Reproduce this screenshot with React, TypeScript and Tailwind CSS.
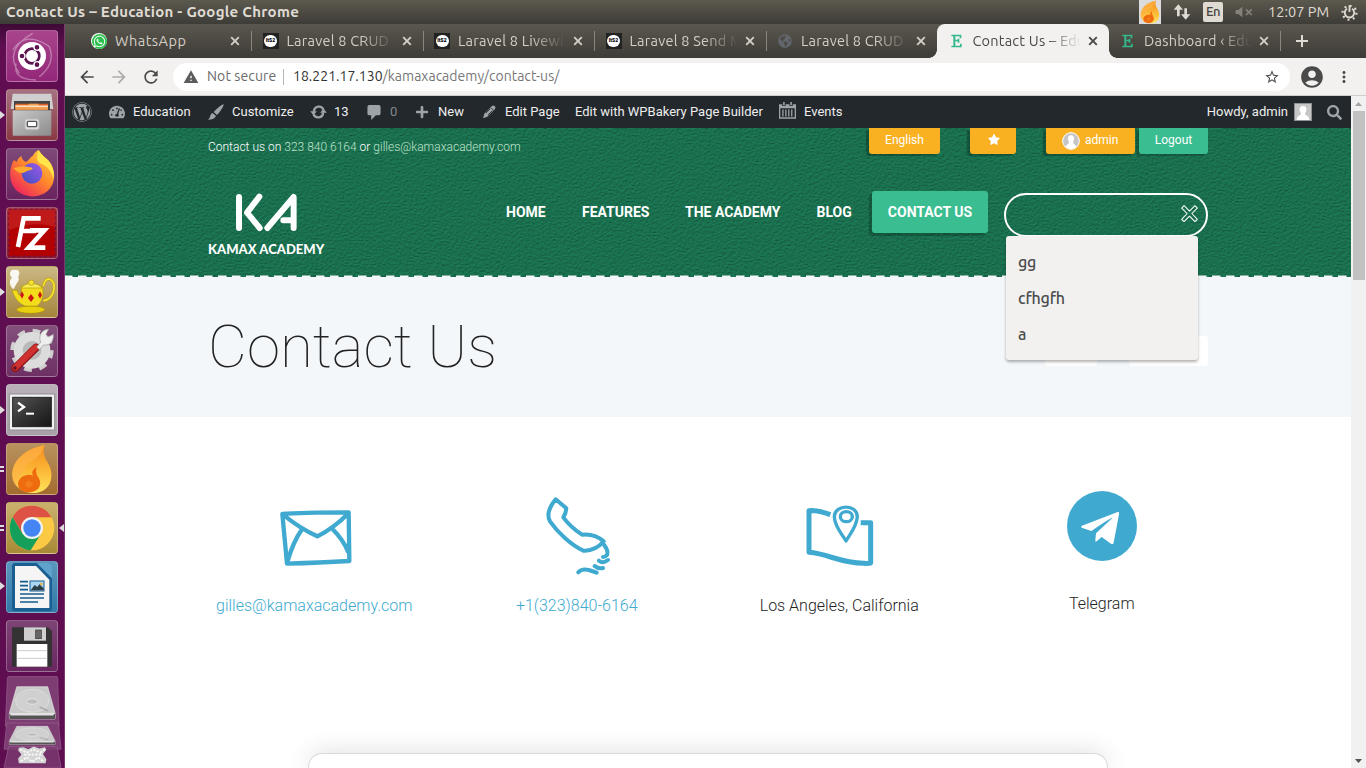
import React from "react";
import { FaWordpress, FaTachometerAlt, FaPlus, FaStar, FaWhatsapp, FaSearch, FaGlobeAmericas } from "react-icons/fa";
import { MdStarBorder, MdAccountCircle, MdMoreVert, MdWarning, MdArrowBack, MdArrowForward, MdRefresh } from "react-icons/md";

const UI = "font-['Ubuntu','Noto_Sans',sans-serif]";

function Tile({ className, children, label }: { className: string; children: React.ReactNode; label: string }) {
  return (
    <div aria-label={label} className={`h-[52px] w-[52px] shrink-0 rounded-[4px] border border-white/25 ${className}`}>
      <svg viewBox="3 3 150 150" className="block h-full w-full">{children}</svg>
    </div>
  );
}

function Flame() {
  return (
    <g>
      <path d="M116 6C106 36 122 50 130 68C148 108 128 150 80 150C44 150 19 126 19 94C19 52 60 16 116 6Z" fill="url(#fl)" />
      <path d="M116 6C106 32 92 46 80 54C62 62 54 70 56 86C38 96 30 112 34 132C22 120 18 108 19 94C19 52 60 16 116 6Z" fill="#ffb347" opacity=".7" />
      <path d="M92 72C78 80 76 92 82 98C62 90 36 102 36 124C36 140 50 148 68 148C90 148 106 134 102 114C98 100 86 94 92 72Z" fill="#ee6c0f" />
      <path d="M70 112C56 116 54 132 66 134C78 134 84 124 78 114C76 118 70 118 70 112Z" fill="#f47c1c" />
    </g>
  );
}

function Drive() {
  return (
    <g>
      <path d="M32 32H124L146 110V128H10V110Z" fill="#c9c9c9" stroke="#e8e8e8" strokeWidth="2" />
      <path d="M10 112H146V128H10Z" fill="#555" />
      <path d="M10 110H146L140 118H14Z" fill="#e2e2e2" />
      <ellipse cx="78" cy="74" rx="50" ry="34" fill="#d0d0d0" stroke="#e4e4e4" strokeWidth="2" />
      <ellipse cx="78" cy="76" rx="17" ry="8" fill="#bdbdbd" stroke="#f0f0f0" strokeWidth="2" />
      <path d="M100 92L126 104" stroke="#aaa" strokeWidth="5" />
    </g>
  );
}

function Launcher() {
  return (
    <aside className="relative h-[744px] w-[65px] shrink-0 overflow-hidden border-r border-[#7c3a70] bg-[#5f0e50] bg-linear-to-b from-[#3d0a35] via-[#600e51] via-[3%] to-[#5d0d50]">
      <div className="flex flex-col gap-[7px] pl-[6px] pt-[6px]">
        <Tile label="Dash" className="bg-linear-to-b from-[#a8448c] to-[#932779]">
          <path d="M20 60Q60 0 130 50Q150 100 100 140M40 130Q-10 60 80 10M30 100Q20 150 90 150" fill="none" stroke="#fff" strokeOpacity=".35" strokeWidth="4" />
          <circle cx="78" cy="78" r="42" fill="#fff" />
          <circle cx="78" cy="78" r="22" fill="none" stroke="#5c1450" strokeWidth="8" />
          {[[48, 78], [93, 52], [93, 104]].map(([x, y]) => <circle key={`${x}${y}`} cx={x} cy={y} r="9" fill="#5c1450" stroke="#fff" strokeWidth="4" />)}
        </Tile>
        <Tile label="Files" className="bg-linear-to-b from-[#a57280] to-[#893944]">
          <path d="M20 14H136L142 60H14Z" fill="#cfcfcf" />
          <rect x="24" y="36" width="108" height="30" fill="#444" />
          <path d="M28 44H126V62H28Z" fill="#d9632a" />
          <path d="M28 48H66L70 44H98V50H126V62H28Z" fill="#f0a050" />
          <rect x="28" y="50" width="98" height="3" fill="#fff" />
          <rect x="20" y="64" width="116" height="76" rx="3" fill="url(#cab)" />
          <rect x="57" y="90" width="42" height="32" rx="6" fill="#ddd" stroke="#bbb" strokeWidth="3" />
          <rect x="64" y="97" width="28" height="16" rx="3" fill="#fff" stroke="#555" strokeWidth="4" />
        </Tile>
        <Tile label="Firefox" className="bg-linear-to-b from-[#7d4a78] to-[#6a235f]">
          <path d="M98 6C106 22 118 28 128 38C150 64 152 104 124 130C98 152 52 150 28 124C8 102 8 60 24 36L32 42C34 34 40 28 46 24C48 34 52 38 60 42C70 36 74 26 80 24C84 16 90 10 98 6Z" fill="url(#ff)" />
          <path d="M98 6C108 24 120 30 128 38C142 56 146 76 142 92C134 60 116 52 102 46C90 38 92 20 98 6Z" fill="#ffe54a" />
          <circle cx="78" cy="76" r="31" fill="url(#ffp)" />
          <path d="M22 60C42 54 62 54 80 60C78 68 66 66 58 72C48 78 36 76 22 60Z" fill="#ffac2e" />
        </Tile>
        <Tile label="FileZilla" className="bg-linear-to-b from-[#a03a48] to-[#82203a]">
          <rect x="8" y="8" width="140" height="140" fill="#b30000" stroke="#7a1038" strokeWidth="5" strokeDasharray="9 7" />
          <path d="M8 8H148V60Q80 40 8 70Z" fill="#c72a2a" opacity=".6" />
          <path d="M36 120L53 34H104M46 72H90M72 70H115L68 122H118" fill="none" stroke="#fff" strokeWidth="14" />
        </Tile>
        <Tile label="Teapot" className="bg-linear-to-b from-[#cbb883] to-[#a5853c]">
          <path d="M112 60C118 26 148 38 144 66C142 92 124 104 112 104" fill="none" stroke="#bfa010" strokeWidth="9" />
          <path d="M112 60C118 26 148 38 144 66C142 92 124 104 112 104" fill="none" stroke="#f5e335" strokeWidth="5" />
          <ellipse cx="74" cy="131" rx="42" ry="11" fill="#e8d010" stroke="#a88c08" strokeWidth="2" />
          <path d="M18 72L34 74C36 88 42 90 46 84L46 60H108C116 84 108 112 92 120H58C36 112 26 96 18 72Z" fill="#f2dc1c" stroke="#b39a0a" strokeWidth="2" />
          <path d="M46 66C56 48 96 48 108 66Z" fill="#f8ec50" stroke="#b39a0a" strokeWidth="2" />
          <circle cx="76" cy="50" r="8" fill="#f5e335" stroke="#b39a0a" strokeWidth="2" />
          <path d="M48 76l6 11-6 11-6-11ZM75 84l9 12-9 12-9-12ZM102 76l6 11-6 11-6-11Z" fill="#cc1515" />
          <path d="M20 68C8 54 10 40 18 36C6 24 14 8 26 12C40 8 44 24 36 32C44 44 30 50 24 68Z" fill="#fff" opacity=".9" />
        </Tile>
        <Tile label="Settings" className="bg-linear-to-b from-[#83507b] to-[#6e3064]">
          <circle cx="78" cy="76" r="56" fill="none" stroke="#cfcfcf" strokeWidth="18" strokeDasharray="22 22" />
          <circle cx="78" cy="76" r="40" fill="none" stroke="#dcdcdc" strokeWidth="30" />
          <circle cx="78" cy="76" r="28" fill="#b9b9b9" />
          <path d="M28 129L90 68" stroke="#8f1414" strokeWidth="24" strokeLinecap="round" />
          <path d="M28 128L89 67" stroke="#cf3030" strokeWidth="18" strokeLinecap="round" />
          <circle cx="27" cy="129" r="5" fill="#5a1020" />
          <path d="M92 66L104 52C96 30 108 14 128 12L120 28L126 36L142 28C144 50 132 62 112 60L100 74Z" fill="#eee" stroke="#999" strokeWidth="2" />
        </Tile>
        <Tile label="Terminal" className="bg-linear-to-b from-[#b9b0b9] to-[#a89fa9]">
          <rect x="10" y="30" width="136" height="108" fill="#f1f1f1" stroke="#8f8f8f" strokeWidth="3" />
          <rect x="20" y="40" width="116" height="88" fill="url(#term)" stroke="#222" strokeWidth="3" />
          <path d="M36 56L54 69L36 82" fill="none" stroke="#fff" strokeWidth="7" />
          <path d="M60 89H84" stroke="#fff" strokeWidth="6" />
        </Tile>
        <Tile label="Flame" className="bg-linear-to-b from-[#b8925f] to-[#a46c2e]"><Flame /></Tile>
        <Tile label="Chrome" className="bg-linear-to-b from-[#cbb06d] to-[#a88a35]">
          <circle cx="78" cy="78" r="67" fill="#fbc943" />
          <path d="M78 11A67 67 0 0 0 20 45L50 96L78 46H136A67 67 0 0 0 78 11Z" fill="#de5145" />
          <path d="M20 45A67 67 0 0 0 74 145L106 94L50 96Z" fill="#14a05a" />
          <circle cx="78" cy="78" r="33" fill="#f2f2f2" />
          <circle cx="78" cy="78" r="26" fill="#4385f4" />
        </Tile>
        <Tile label="Writer" className="bg-linear-to-b from-[#5b97bd] to-[#2f79a8]">
          <rect x="18" y="6" width="120" height="144" rx="10" fill="#1a5e92" />
          <path d="M92 6H128Q138 6 138 16V52Z" fill="#5fa3cd" />
          <path d="M27 15H90L130 56V141H27Z" fill="#f5f5f5" />
          <path d="M42 62H66M42 74H66M42 86H66M42 99H114M42 111H114M42 123H96" stroke="#155c8f" strokeWidth="5" />
          <rect x="72" y="60" width="42" height="30" fill="#a9d6f2" stroke="#155c8f" strokeWidth="3" />
          <path d="M74 88L86 72L94 78L100 70L113 82V88Z" fill="#2c3e46" /><circle cx="106" cy="69" r="4" fill="#f0b03c" />
        </Tile>
        <Tile label="Floppy" className="bg-linear-to-b from-[#7d4475] to-[#692560]">
          <path d="M18 22H126L138 34V140H18Z" fill="#333" />
          <rect x="54" y="22" width="66" height="40" fill="#cfcfcf" /><rect x="89" y="30" width="17" height="26" fill="#666" stroke="#333" strokeWidth="2" />
          <rect x="32" y="72" width="92" height="68" fill="#fff" />
          <path d="M34 92H122M34 115H122" stroke="#ccc" strokeWidth="3" />
        </Tile>
      </div>
      <svg viewBox="0 530 198 274" className="absolute left-0 top-[652px] h-[92px] w-[65px]" preserveAspectRatio="xMinYMin slice">
        <path d="M22 536Q22 530 30 530H164Q172 530 172 536L176 680H16Z" fill="#7d3c72" stroke="#96608d" strokeWidth="2" />
        <g transform="translate(18 530)"><Drive /></g>
        <path d="M20 670H174L182 748H12Z" fill="#7d3c72" stroke="#96608d" strokeWidth="2" />
        <g transform="translate(18 662) scale(1 .56)"><Drive /></g>
        <path d="M26 740H170L182 802H12Z" fill="#7d3c72" fillOpacity=".8" stroke="#96608d" strokeWidth="2" />
        <path d="M56 744L70 742L84 748L100 740L118 746L134 742L138 750L128 762L138 778L136 790H56L54 776L64 764L54 752Z" fill="#d5d5d5" />
        <path d="M60 748L80 758L100 748L120 758L134 748M62 784L80 772L96 786L114 772L132 786M72 764H124" stroke="#fafafa" strokeWidth="5" fill="none" strokeDasharray="7 4" />
      </svg>
      <svg viewBox="0 0 65 744" className="pointer-events-none absolute left-0 top-0 h-[744px] w-[65px]">
        <path d="M0 87l5 4-5 4ZM0 264l5 4-5 4ZM0 382l5 4-5 4ZM0 558l5 4-5 4ZM64 500l-5 4 5 4Z" fill="#ddd" />
        <path d="M0 443H4M0 447H4M0 502H4M0 506H4" stroke="#ddd" strokeWidth="2" />
      </svg>
    </aside>
  );
}

function Defs() {
  return (
    <svg className="absolute h-0 w-0" aria-hidden="true">
      <defs>
        <linearGradient id="fl" x1="0" y1="0" x2="0" y2="1"><stop offset="0" stopColor="#f58a1f" /><stop offset=".5" stopColor="#fbb534" /><stop offset="1" stopColor="#ffe45c" /></linearGradient>
        <linearGradient id="cab" x1="0" y1="0" x2="1" y2="1"><stop offset="0" stopColor="#c9c9c9" /><stop offset="1" stopColor="#8b8b8b" /></linearGradient>
        <linearGradient id="ff" x1="1" y1="0" x2=".2" y2="1"><stop offset="0" stopColor="#ffe14a" /><stop offset=".5" stopColor="#ff8a2a" /><stop offset="1" stopColor="#ee1f5f" /></linearGradient>
        <linearGradient id="ffp" x1="1" y1="0" x2="0" y2="1"><stop offset="0" stopColor="#a05ae8" /><stop offset="1" stopColor="#3f4fc0" /></linearGradient>
        <linearGradient id="term" x1="0" y1="0" x2="1" y2="1"><stop offset="0" stopColor="#555" /><stop offset=".5" stopColor="#333" /><stop offset="1" stopColor="#151515" /></linearGradient>
        <filter id="felt" x="0" y="0" width="100%" height="100%" colorInterpolationFilters="sRGB">
          <feTurbulence type="fractalNoise" baseFrequency="0.42 0.62" numOctaves="2" seed="7" result="n" />
          <feDiffuseLighting in="n" surfaceScale="0.7" diffuseConstant="1.02" lightingColor="#1e815b">
            <feDistantLight azimuth="250" elevation="58" />
          </feDiffuseLighting>
        </filter>
      </defs>
    </svg>
  );
}

function TopPanel() {
  return (
    <div className={`flex h-6 items-center bg-linear-to-b from-[#5c594f] to-[#3e3c37] text-[#dfdbd2] ${UI}`}>
      <span className="ml-[6px] whitespace-nowrap text-[15px] font-bold leading-6 tracking-[0.28px]">Contact Us – Education - Google Chrome</span>
      <div className="ml-auto flex items-center">
        <div className="mr-[12px] h-6 w-[22px] bg-[#dcdcdc]"><svg viewBox="14 2 128 152" className="h-full w-full"><Flame /></svg></div>
        <svg viewBox="0 0 54 54" className="mr-[12px] h-[18px] w-[18px]" fill="#dfdbd2"><path d="M16 4L30 20H20V40H12V20H2ZM38 50L24 34H34V16H42V34H52Z" /></svg>
        <span className="mr-[12px] flex h-5 w-5 items-center justify-center rounded-[2px] bg-[#dfdbd2] text-[13px] font-medium tracking-[-0.5px] text-[#45433d]">En</span>
        <svg viewBox="0 0 54 36" className="mr-[15px] h-3 w-[18px]"><path d="M2 12H10L22 2V34L10 24H2Z" fill="#85827a" /><path d="M33 10L50 27M50 10L33 27" stroke="#85827a" strokeWidth="5" /></svg>
        <span className="w-[61px] whitespace-nowrap text-[14.5px] tracking-[0.02px]">12:07 PM</span>
        <svg viewBox="0 0 54 54" className="ml-[12px] mr-[8px] h-[17px] w-[17px]" fill="none" stroke="#dfdbd2"><path d="M19 15A15 15 0 1 0 35 15" strokeWidth="6" /><path d="M27 4V25" strokeWidth="6" /><circle cx="27" cy="28" r="22" strokeWidth="7" strokeDasharray="6 11.28" /></svg>
      </div>
    </div>
  );
}

function Favicon({ kind }: { kind: string }) {
  if (kind === "wa")
    return <span className="flex h-4 w-4 items-center justify-center rounded-full bg-white"><span className="flex h-[15px] w-[15px] items-center justify-center rounded-full bg-[#2cc14e]"><FaWhatsapp className="h-[13px] w-[13px] text-white" /></span></span>;
  if (kind === "its") return <span className="flex h-4 w-4 items-center justify-center bg-[#222]"><span className="flex h-3 w-[13px] items-center justify-center rounded-full bg-white font-['Roboto',sans-serif] text-[5px] font-black text-black">ItS2</span></span>;
  if (kind === "globe") return <FaGlobeAmericas className="h-[14px] w-4 text-[#62676e]" />;
  return (
    <svg viewBox="0 0 48 48" className="h-4 w-4"><path d="M7 5H37V16H32V10H19V20H26V17H31V29H26V25H19V38H33V32H38V43H7V38H13V10H7Z" fill="#33b98c" /></svg>
  );
}

const tabs = [
  { title: "WhatsApp", icon: "wa" },
  { title: "Laravel 8 CRUD A", icon: "its" },
  { title: "Laravel 8 Livewir", icon: "its" },
  { title: "Laravel 8 Send M", icon: "its" },
  { title: "Laravel 8 CRUD A", icon: "globe" },
  { title: "Contact Us – Edu", icon: "e", active: true },
  { title: "Dashboard ‹ Edu", icon: "e" },
];

function TabStrip() {
  return (
    <div className={`flex h-[34px] bg-linear-to-b from-[#5a574e] to-[#3e3c37] pl-[14.5px] ${UI}`}>
      {tabs.map((t, i) => (
        <div key={i} className={`relative flex h-full w-[171.5px] shrink-0 items-center pl-[11.5px] ${t.active ? "rounded-t-lg bg-[#f2f1f0] text-[#4a4a4a]" : "text-[#d3cfc6]"}`}>
          {t.active && <span className="absolute -left-2 bottom-0 h-2 w-2 bg-[radial-gradient(circle_at_0_0,transparent_7.5px,#f2f1f0_8px)]" />}
          {t.active && <span className="absolute -right-2 bottom-0 h-2 w-2 bg-[radial-gradient(circle_at_100%_0,transparent_7.5px,#f2f1f0_8px)]" />}
          <Favicon kind={t.icon} />
          <span className={`ml-2 w-[108px] overflow-hidden whitespace-nowrap text-[14.5px] leading-5 ${t.icon === "wa" ? "tracking-[0.5px]" : "tracking-[0.22px] [mask-image:linear-gradient(to_right,black_68%,transparent)]"}`}>{t.title}</span>
          <svg viewBox="0 0 14 14" className="ml-[5px] h-[14px] w-[14px] shrink-0" fill="none" stroke="currentColor" strokeWidth="1.9"><path d="M3.2 3.2L10.8 10.8M10.8 3.2L3.2 10.8" /></svg>
          {i !== 4 && !t.active && <span className="absolute -right-px top-[7px] h-5 w-px bg-[#8a867c]" />}
        </div>
      ))}
      <svg viewBox="0 0 14 14" className="ml-[14.5px] mt-[10px] h-[14px] w-[14px]" fill="none" stroke="#dfdbd2" strokeWidth="2"><path d="M7 1V13M1 7H13" /></svg>
    </div>
  );
}

function Toolbar() {
  return (
    <div className={`flex h-[38px] items-center border-b border-[#cfcecd] bg-[#f2f1f0] text-[#4a4a4a] ${UI}`}>
      <MdArrowBack className="ml-[12px] h-5 w-5" />
      <MdArrowForward className="ml-[12px] h-5 w-5 text-[#ababab]" />
      <MdRefresh className="ml-[12px] h-5 w-5" />
      <div className="ml-[12px] flex h-7 w-[1117px] items-center rounded-full bg-white text-[14px]">
        <MdWarning className="ml-[10px] h-4 w-4 text-[#5c5c5c]" />
        <span className="ml-2 w-[69px] whitespace-nowrap tracking-[0.1px] text-[#6b6b6b]">Not secure</span>
        <span className="ml-[7px] h-4 w-px bg-[#b5b5b5]" />
        <span className="ml-[9px] whitespace-nowrap tracking-[0.02px] text-[#777]"><span className="text-[#333]">18.221.17.130</span>/kamaxacademy/contact-us/</span>
        <MdStarBorder className="ml-auto mr-[10px] h-4 w-4" />
      </div>
      <MdAccountCircle className="ml-[9px] h-[26px] w-[26px]" />
      <MdMoreVert className="ml-[10px] h-[18px] w-[18px]" />
    </div>
  );
}

function BarItem({ w, icon, text, muted }: { w: string; icon?: React.ReactNode; text?: string; muted?: boolean }) {
  return (
    <div className={`flex h-full shrink-0 items-center gap-2 whitespace-nowrap pl-[7px] ${w}`}>
      {icon && <span className="flex w-4 shrink-0 justify-center text-[#9ea3a8]">{icon}</span>}
      {text && <span className={muted ? "text-[#82878c]" : ""}>{text}</span>}
    </div>
  );
}

function AdminBar() {
  return (
    <div className="flex h-8 items-center bg-[#23282d] font-['Roboto',sans-serif] text-[13px] text-[#eee]">
      <BarItem w="w-[37px]" icon={<FaWordpress className="ml-[4px] h-5 w-5 shrink-0" />} />
      <BarItem w="w-[99px]" icon={<FaTachometerAlt className="h-4 w-4" />} text="Education" />
      <BarItem w="w-[102px]" icon={<svg viewBox="0 0 48 48" className="h-4 w-4" fill="currentColor"><path d="M47 1Q48 6 35 24L27 33L17 24Q36 4 47 1ZM14 27L24 36Q20 47 0 47Q6 42 7 35Q9 28 14 27Z" /></svg>} text="Customize" />
      <BarItem w="w-[56px]" icon={<svg viewBox="0 0 50 42" className="h-[14px] w-[17px] shrink-0"><path d="M11 20C12 2 34 0 40 14M39 22C38 40 16 42 10 28" fill="none" stroke="currentColor" strokeWidth="7" /><path d="M0 19H20L10 31ZM30 23H50L40 11Z" fill="currentColor" /></svg>} text="13" />
      <BarItem w="w-[48px]" icon={<svg viewBox="0 0 14 16" className="h-[15px] w-[14px]"><path d="M2 0H12Q14 0 14 2V9Q14 11 12 11H9L4 16V11H2Q0 11 0 9V2Q0 0 2 0Z" fill="currentColor" /></svg>} text="0" muted />
      <BarItem w="w-[67px]" icon={<FaPlus className="h-[14px] w-[14px]" />} text="New" />
      <BarItem w="w-[94px]" icon={<svg viewBox="0 0 42 42" className="h-[14px] w-[14px]"><path d="M3 40L7 26L30 3Q34 0 38 4Q42 8 39 12L16 35Z" fill="currentColor" /><path d="M28 9L34 15M12 24L25 11M18 30L31 17" stroke="#23282d" strokeWidth="2.5" /></svg>} text="Edit Page" />
      <BarItem w="w-[205px]" text="Edit with WPBakery Page Builder" />
      <BarItem w="w-[90px]" icon={<svg viewBox="0 0 52 52" className="-ml-[2px] -mt-[3px] h-[17px] w-[17px] shrink-0"><path d="M0 7H52V51H0ZM4 19V47H48V19Z" fill="currentColor" fillRule="evenodd" /><path d="M15 1V12M37 1V12" stroke="#23282d" strokeWidth="10" /><path d="M15 0V10M37 0V10" stroke="currentColor" strokeWidth="5" /><path d="M12 23V44M21 23V44M30 23V44M39 23V44" stroke="currentColor" strokeWidth="4" /></svg>} text="Events" />
      <span className="ml-auto whitespace-nowrap">Howdy, admin</span>
      <svg viewBox="0 0 54 54" className="ml-[6px] h-[18px] w-[18px]"><rect width="54" height="54" fill="#c6c6c6" /><path d="M27 9C36 9 38 16 37 22C36 28 33 31 33 33C34 38 45 37 46 51H8C9 37 20 38 21 33C21 31 18 28 17 22C16 16 18 9 27 9Z" fill="#fff" /><rect x="1.5" y="1.5" width="51" height="51" fill="none" stroke="#8d9196" strokeWidth="3" /></svg>
      <FaSearch className="ml-[15px] mr-[9px] h-[15px] w-[15px] text-[#9ea3a8]" />
    </div>
  );
}

function Header() {
  return (
    <header className="relative h-[149px] bg-[#1a7350] font-['Roboto',sans-serif] text-white">
      <svg className="absolute inset-0 h-full w-full"><rect width="100%" height="100%" filter="url(#felt)" /><path d="M-1 148.3H1286" stroke="#f3f7fa" strokeWidth="1.6" strokeDasharray="8.5 5.5" /></svg>
      <div className="relative mx-auto w-[1000px]">
        <div className="flex h-[26px] text-[12px]">
          <p className="mt-[10px] whitespace-nowrap text-[12px] font-light leading-[18px]">Contact us on <span className="text-[#bfe2cc]">323 840 6164</span> or <span className="text-[#bfe2cc]">gilles@kamaxacademy.com</span></p>
          <div className="ml-auto flex h-[26px] leading-[24px]">
            <span className="w-[71px] rounded-b-[3px] bg-[#f9b122] text-center shadow-[-3px_2px_1px_rgba(0,0,0,.25)]">English</span>
            <span className="ml-[30px] flex w-[46px] items-center justify-center rounded-b-[3px] bg-[#f9b122] pb-[3px] pl-[2px] shadow-[-3px_2px_1px_rgba(0,0,0,.25)]"><FaStar className="h-[11px] w-[12px]" /></span>
            <span className="ml-[30px] flex w-[89px] rounded-b-[3px] bg-[#f9b122] pl-[16px] shadow-[-3px_2px_1px_rgba(0,0,0,.25)]">
              <svg viewBox="0 0 54 54" className="mr-[5px] mt-[4px] h-[18px] w-[18px]"><circle cx="27" cy="27" r="25" fill="#c6c6c6" stroke="#fff" strokeWidth="3" /><path d="M27 10C35 10 37 16 36 22C35 27 33 30 33 32C34 36 42 37 43 45Q27 57 11 45C12 37 20 36 21 32C21 30 19 27 18 22C17 16 19 10 27 10Z" fill="#fff" /></svg>
              admin
            </span>
            <span className="ml-[4px] w-[69px] rounded-b-[3px] bg-[#3abd91] text-center shadow-[-3px_2px_1px_rgba(0,0,0,.2)]">Logout</span>
          </div>
        </div>
        <div className="flex">
          <div className="mt-[39px] w-[118px]">
            <svg viewBox="165 204 192 118" className="ml-[27px] h-[39.3px] w-[64px]" fill="none" stroke="#fff" strokeWidth="18" strokeLinecap="round" strokeLinejoin="round"><path d="M177 216V309M238 215L201 263L239 309M262 309L341 216V309M310 286H338" /></svg>
            <p className="mt-[10px] whitespace-nowrap font-['Lato',sans-serif] text-[13px] font-black leading-[14px] tracking-[0.03px]">KAMAX ACADEMY</p>
          </div>
          <nav className="ml-[180px] mt-[37px] flex h-[42px] whitespace-nowrap text-[14px] font-bold leading-[42px]">
            <a className="w-[76px]">HOME</a><a className="w-[103px]">FEATURES</a><a className="w-[131.5px]">THE ACADEMY</a><a className="w-[55.5px]">BLOG</a>
            <a className="w-[116px] rounded-[3px] bg-[#3abd91] text-center shadow-[-3px_3px_1px_rgba(0,0,0,.22)]">CONTACT US</a>
          </nav>
          <div className="relative ml-auto mt-[39px] h-[44px] w-[204px] rounded-[22px] border-2 border-white">
            <svg viewBox="0 0 50 50" className="absolute right-[8px] top-[10px] h-[17px] w-[17px]" fill="none" stroke="#fff" strokeWidth="3"><path d="M9 2L25 18L41 2L48 9L32 25L48 42L41 49L25 33L9 49L2 42L18 25L2 9Z" strokeLinejoin="round" /></svg>
            <div className={`absolute left-0 top-[41px] z-10 flex h-[124px] w-[192px] flex-col rounded-[3px] bg-[#f2f1f0] pl-[12px] pt-[8px] text-[16px] font-medium text-[#4c4c4c] shadow-[0_2px_3px_rgba(0,0,0,.3)] ${UI}`}>
              <span className="h-9 leading-9 tracking-[-0.2px]">gg</span><span className="h-9 leading-9 tracking-[-0.2px]">cfhgfh</span><span className="h-9 leading-9">a</span>
            </div>
          </div>
        </div>
      </div>
    </header>
  );
}

function Feature({ text, link, lift, children }: { text: string; link?: boolean; lift?: boolean; children: React.ReactNode }) {
  return (
    <div className="flex flex-col items-center">
      <div className="flex h-[100px] w-full justify-center">{children}</div>
      <p className={`whitespace-nowrap text-[16px] font-light leading-6 ${lift ? "mt-[15px]" : "mt-[17px]"} ${link ? "text-[#40aacf]" : "text-[#222]"}`}>{text}</p>
    </div>
  );
}

function Features() {
  return (
    <section className="mx-auto grid w-[1000px] grid-cols-4 gap-[50px] pt-[60px]">
      <Feature text="gilles@kamaxacademy.com" link>
        <svg viewBox="225 -9 240 300" className="ml-[2px] h-[100px] w-[80px]" fill="none" stroke="#3fa9d0" strokeWidth="13" strokeLinejoin="round" strokeLinecap="round"><path d="M247 102Q300 97 446 97L448 243Q360 248 261 251L247 102ZM252 106Q300 145 352 169Q400 145 444 101M306 148Q280 185 264 240M398 148Q430 180 444 215" /></svg>
      </Feature>
      <Feature text="+1(323)840-6164" link>
        <svg viewBox="1025 -9 225 300" className="ml-[4px] h-[100px] w-[75px]" fill="none" stroke="#3fa9d0" strokeWidth="12" strokeLinejoin="round" strokeLinecap="round"><path d="M1069 58L1101 85Q1100 99 1092 112Q1112 140 1148 164Q1185 160 1213 184Q1188 214 1152 212C1115 195 1075 157 1052 124Q1037 97 1069 58ZM1214 194Q1228 212 1223 225Q1218 231 1211 231M1199 242Q1210 252 1226 240M1186 258Q1196 267 1211 264M1137 277Q1147 265 1168 270Q1184 275 1192 278" /></svg>
      </Feature>
      <Feature text="Los Angeles, California">
        <svg viewBox="245 -9 225 300" className="h-[100px] w-[75px]" fill="none" stroke="#3fa9d0" strokeWidth="15" strokeLinejoin="round" strokeLinecap="butt"><path d="M330 104Q292 90 266 92L266 217C325 222 360 249 430 250Q451 251 451 248V128H421" /><path d="M377 183C365 163 341 136 342 109C344 72 411 72 411 110C410 138 389 163 377 183Z" strokeWidth="10" /><ellipse cx="378" cy="110" rx="18" ry="15" strokeWidth="10" /></svg>
      </Feature>
      <Feature text="Telegram" lift>
        <svg viewBox="1038 -9 216 300" className="h-[100px] w-[72px]"><circle cx="1146" cy="138" r="105" fill="#3fa9d0" /><path d="M1086 137L1193 96Q1199 94 1197 103L1181 188Q1179 195 1173 191L1145 171L1130 184Q1125 188 1126 181L1128 160L1178 113Q1173 112 1114 153L1085 143Q1081 139 1086 137Z" fill="#fff" /></svg>
      </Feature>
    </section>
  );
}

export default function App() {
  return (
    <div className="flex h-[768px] w-[1366px] flex-col overflow-hidden bg-white">
      <Defs />
      <TopPanel />
      <div className="flex h-[744px]">
        <Launcher />
        <div className="flex w-[1301px] flex-col">
          <TabStrip />
          <Toolbar />
          <div className="flex h-[672px]">
            <main className="flex w-[1286px] flex-col overflow-hidden font-['Roboto',sans-serif]">
              <AdminBar />
              <Header />
              <section className="h-[140px] bg-[#f3f7fa]">
                <div className="mx-auto flex w-[1000px] items-start">
                  <h1 className="mt-[34px] text-[60px] font-thin leading-[72px] text-[#222]">Contact Us</h1>
                  <span className="ml-auto mt-[59px] h-[30px] w-[52px] rounded-[3px] bg-white" />
                  <span className="ml-[32px] mt-[59px] h-[30px] w-[79px] rounded-[3px] bg-white" />
                </div>
              </section>
              <Features />
              <div className="mx-auto mt-auto h-[15px] w-[800px] shrink-0 rounded-t-[14px] border border-b-0 border-[#d9d9d9] bg-white shadow-[0_0_24px_rgba(0,0,0,.16)]" />
            </main>
            <div className="flex w-[15px] flex-col items-center bg-[#f1f1f1]">
              <svg viewBox="0 0 15 15" className="h-[15px] w-[15px]"><path d="M4 10L7.5 6L11 10Z" fill="#a3a3a3" /></svg>
              <div className="h-[169px] w-[12px] bg-[#c1c1c1]" />
              <svg viewBox="0 0 15 15" className="mt-auto h-[15px] w-[15px]"><path d="M4 6L7.5 10L11 6Z" fill="#505050" /></svg>
            </div>
          </div>
        </div>
      </div>
    </div>
  );
}
